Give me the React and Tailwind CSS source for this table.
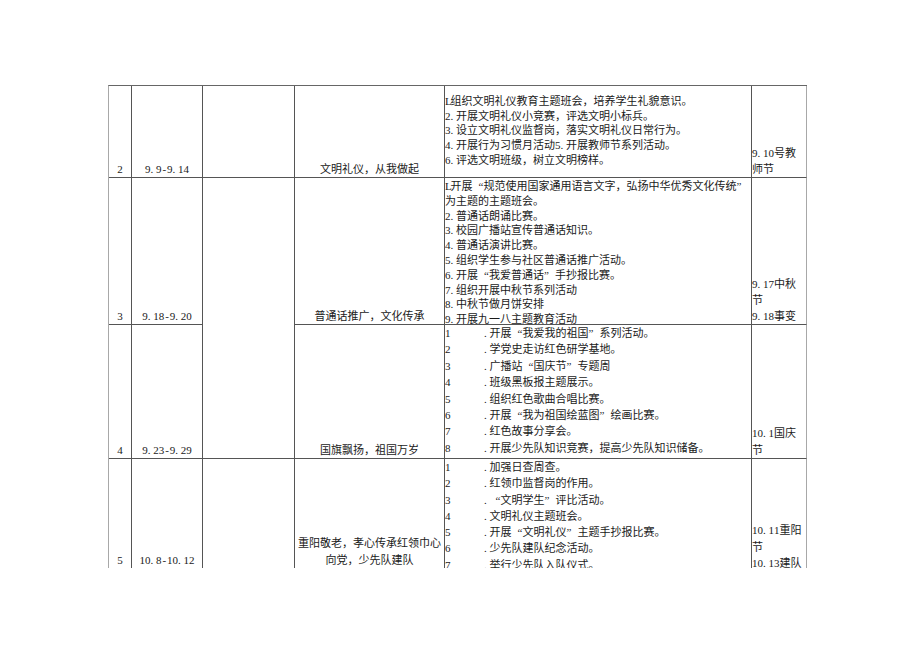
import React from "react";

function T({ s }) {
  const chars = Array.from(s);
  return (
    <>
      {chars.map((c, i) => {
        if (c === "“")
          return (
            <span key={i} className="inline-block w-[11px] text-right">“</span>
          );
        if (c === "”")
          return (
            <span key={i} className="inline-block w-[11px] text-left">”</span>
          );
        if (c === ".")
          return (
            <span key={i} className="inline-block w-[5.5px] text-left">.</span>
          );
        if (c.charCodeAt(0) < 128 && c !== " ")
          return (
            <span key={i} className="inline-block w-[5.5px] text-center">{c}</span>
          );
        return <React.Fragment key={i}>{c}</React.Fragment>;
      })}
    </>
  );
}

function Lines({ lines, className }) {
  return (
    <div className={className}>
      {lines.map((l, i) => (
        <div key={i} className="whitespace-nowrap">
          <T s={l} />
        </div>
      ))}
    </div>
  );
}

function NumList({ items, className }) {
  return (
    <div className={className}>
      {items.map((t, i) => (
        <div key={i} className="flex whitespace-nowrap">
          <span className="w-[39px] shrink-0">
            <T s={String(i + 1)} />
          </span>
          <span>
            <T s={t} />
          </span>
        </div>
      ))}
    </div>
  );
}

const base = "overflow-hidden border-r border-b border-[#555]";
const lastCol = "overflow-hidden border-r border-b border-b-[#555] border-r-[#a8a8a8]";
const baseLast = "overflow-hidden border-r border-[#555]";
const lastColLast = "overflow-hidden border-r border-r-[#a8a8a8]";

export default function App() {
  return (
    <div className="min-h-[651px] bg-white pt-[85px] pl-[108px]">
      <div className="grid w-max grid-cols-[23px_71px_92px_150px_307px_55px] grid-rows-[92px_147px_134px_109px] border-t border-l border-t-[#666] border-l-[#a8a8a8] font-['Liberation_Serif','Noto_Sans_CJK_SC',serif] text-[11px] text-[#1a1a1a]">
        {/* Row 2 */}
        <div className={`${base} flex flex-col justify-end text-center leading-[16px]`}><div><T s="2" /></div></div>
        <div className={`${base} flex flex-col justify-end text-center leading-[16px]`}><div><T s="9.9-9.14" /></div></div>
        <div className={base}></div>
        <div className={`${base} flex flex-col justify-end text-center leading-[16px]`}>文明礼仪，从我做起</div>
        <div className={`${base} pt-[8px] leading-[14.7px]`}>
          <Lines
            lines={[
              "L组织文明礼仪教育主题班会，培养学生礼貌意识。",
              "2.开展文明礼仪小竞赛，评选文明小标兵。",
              "3.设立文明礼仪监督岗，落实文明礼仪日常行为。",
              "4.开展行为习惯月活动5.开展教师节系列活动。",
              "6.评选文明班级，树立文明榜样。",
            ]}
          />
        </div>
        <div className={`${lastCol} flex flex-col justify-end leading-[16px]`}>
          <Lines lines={["9.10号教", "师节"]} />
        </div>

        {/* Row 3 */}
        <div className={`${base} flex flex-col justify-end text-center leading-[16px]`}><div><T s="3" /></div></div>
        <div className={`${base} flex flex-col justify-end text-center leading-[16px]`}><div><T s="9.18-9.20" /></div></div>
        <div className={`${base} row-span-2`}></div>
        <div className={`${base} flex flex-col justify-end text-center leading-[16px]`}>普通话推广，文化传承</div>
        <div className={`${base} pt-[1px] leading-[14.8px]`}>
          <Lines
            lines={[
              "L开展“规范使用国家通用语言文字，弘扬中华优秀文化传统”",
              "为主题的主题班会。",
              "2.普通话朗诵比赛。",
              "3.校园广播站宣传普通话知识。",
              "4.普通话演讲比赛。",
              "5.组织学生参与社区普通话推广活动。",
              "6.开展“我爱普通话”手抄报比赛。",
              "7.组织开展中秋节系列活动",
              "8.中秋节做月饼安排",
              "9.开展九一八主题教育活动",
            ]}
          />
        </div>
        <div className={`${lastCol} flex flex-col justify-end leading-[16px]`}>
          <Lines lines={["9.17中秋", "节", "9.18事变"]} />
        </div>

        {/* Row 4 */}
        <div className={`${base} flex flex-col justify-end text-center leading-[16px]`}><div><T s="4" /></div></div>
        <div className={`${base} flex flex-col justify-end text-center leading-[16px]`}><div><T s="9.23-9.29" /></div></div>
        <div className={`${base} flex flex-col justify-end text-center leading-[16px]`}>国旗飘扬，祖国万岁</div>
        <div className={`${base} leading-[16.4px]`}>
          <NumList
            items={[
              ".开展“我爱我的祖国”系列活动。",
              ".学党史走访红色研学基地。",
              ".广播站“国庆节”专题周",
              ".班级黑板报主题展示。",
              ".组织红色歌曲合唱比赛。",
              ".开展“我为祖国绘蓝图”绘画比赛。",
              ".红色故事分享会。",
              ".开展少先队知识竞赛，提高少先队知识储备。",
            ]}
          />
        </div>
        <div className={`${lastCol} flex flex-col justify-end leading-[16.5px]`}>
          <Lines lines={["10.1国庆", "节"]} />
        </div>

        {/* Row 5 */}
        <div className={`${baseLast} pt-[93px] text-center leading-[16px]`}><T s="5" /></div>
        <div className={`${baseLast} pt-[93px] text-center leading-[16px]`}><T s="10.8-10.12" /></div>
        <div className={baseLast}></div>
        <div className={`${baseLast} pt-[76px] text-center leading-[17px]`}>
          <div className="whitespace-nowrap">重阳敬老，孝心传承红领巾心</div>
          <div className="whitespace-nowrap">向党，少先队建队</div>
        </div>
        <div className={`${baseLast} leading-[16.3px]`}>
          <NumList
            items={[
              ".加强日查周查。",
              ".红领巾监督岗的作用。",
              ".“文明学生”评比活动。",
              ".文明礼仪主题班会。",
              ".开展“文明礼仪”主题手抄报比赛。",
              ".少先队建队纪念活动。",
              ".举行少先队入队仪式。",
            ]}
          />
        </div>
        <div className={`${lastColLast} pt-[63px] leading-[16.5px]`}>
          <Lines lines={["10.11重阳", "节", "10.13建队"]} />
        </div>
      </div>
    </div>
  );
}
